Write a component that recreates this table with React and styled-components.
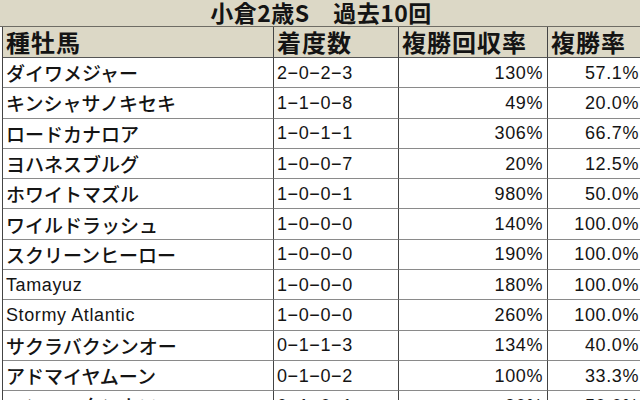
import React from 'react'
import styled, { createGlobalStyle } from 'styled-components'

const GlobalStyle = createGlobalStyle`
  html, body {
    margin: 0;
    padding: 0;
    background: #ffffff;
    overflow: hidden;
  }
  body {
    font-family: "Noto Sans CJK JP", "Noto Sans", sans-serif;
    color: #141414;
  }
`

const Sheet = styled.div`
  width: 640px;
  height: 400px;
  overflow: hidden;
  background: #fff;
`

const Title = styled.div`
  height: 26px;
  background: #dcd8c6;
  border-bottom: 1px solid #6e6c64;
  display: flex;
  align-items: flex-start;
  justify-content: center;
  overflow: hidden;
  font-size: 23px;
  font-weight: 700;
  line-height: 24px;
  padding-left: 2px;
  letter-spacing: 0.5px;
`

const Grid = styled.div`
  display: grid;
  grid-template-columns: 271px 125px 149px 96px;
  margin-left: 2px;
  border-left: 1px solid #444;
`

const HeadCell = styled.div`
  height: 30px;
  background: #dcd8c6;
  border-right: 1px solid #444;
  border-bottom: 1px solid #555;
  display: flex;
  align-items: center;
  padding-left: 3px;
  font-size: 24px;
  font-weight: 700;
  letter-spacing: 1px;
  line-height: 1;
`

const Cell = styled.div`
  height: 29.3px;
  border-right: 1px solid #444;
  border-bottom: 1px solid #8a8a8a;
  display: flex;
  align-items: center;
  justify-content: ${p => (p.$right ? 'flex-end' : 'flex-start')};
  padding: ${p => (p.$right ? '0 4px 0 0' : '0 0 0 3px')};
  font-size: ${p => (p.$latin ? '18px' : '19px')};
  font-weight: 500;
  line-height: 1;
  white-space: nowrap;
  font-family: ${p => (p.$latin ? '"Liberation Sans", "Noto Sans CJK JP", sans-serif' : '"Noto Sans CJK JP", sans-serif')};
  letter-spacing: ${p => (p.$latin ? '0.6px' : '0')};
`

const rows = [
  ['ダイワメジャー', '2-0-2-3', '130%', '57.1%'],
  ['キンシャサノキセキ', '1-1-0-8', '49%', '20.0%'],
  ['ロードカナロア', '1-0-1-1', '306%', '66.7%'],
  ['ヨハネスブルグ', '1-0-0-7', '20%', '12.5%'],
  ['ホワイトマズル', '1-0-0-1', '980%', '50.0%'],
  ['ワイルドラッシュ', '1-0-0-0', '140%', '100.0%'],
  ['スクリーンヒーロー', '1-0-0-0', '190%', '100.0%'],
  ['Tamayuz', '1-0-0-0', '180%', '100.0%'],
  ['Stormy Atlantic', '1-0-0-0', '260%', '100.0%'],
  ['サクラバクシンオー', '0-1-1-3', '134%', '40.0%'],
  ['アドマイヤムーン', '0-1-0-2', '100%', '33.3%'],
  ['マンハッタンカフェ', '0-1-0-1', '90%', '50.0%']
]

export default function App () {
  return (
    <Sheet>
      <GlobalStyle />
      <Title>小倉2歳S　過去10回</Title>
      <Grid>
        <HeadCell>種牡馬</HeadCell>
        <HeadCell>着度数</HeadCell>
        <HeadCell>複勝回収率</HeadCell>
        <HeadCell>複勝率</HeadCell>
        {rows.map(([name, record, ret, rate]) => (
          <React.Fragment key={name}>
            <Cell $latin={/^[A-Za-z]/.test(name)}>{name}</Cell>
            <Cell $latin>{record.replace(/-/g, '\u2212')}</Cell>
            <Cell $right $latin>{ret}</Cell>
            <Cell $right $latin>{rate}</Cell>
          </React.Fragment>
        ))}
      </Grid>
    </Sheet>
  )
}
